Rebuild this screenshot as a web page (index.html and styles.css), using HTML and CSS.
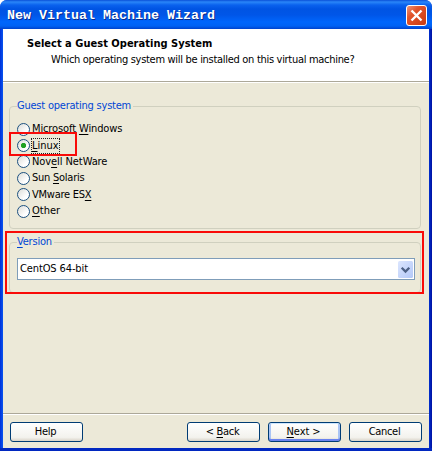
FILE: index.html
```html
<!DOCTYPE html>
<html lang="en">
<head>
<meta charset="utf-8">
<title>New Virtual Machine Wizard</title>
<link rel="stylesheet" href="styles.css">
</head>
<body>
<div class="window">
  <header class="titlebar">
    <span class="caption">New Virtual Machine Wizard</span>
    <svg class="close" width="21" height="21" viewBox="0 0 21 21">
      <defs><linearGradient id="red" x1="0" y1="0" x2="1" y2="1"><stop offset="0" stop-color="#ef9a7e"/><stop offset=".35" stop-color="#e2552c"/><stop offset="1" stop-color="#c83a10"/></linearGradient></defs>
      <rect x=".5" y=".5" width="20" height="20" rx="2.5" fill="url(#red)" stroke="#fff"/>
      <path d="M5.5 5.5l10 10M15.5 5.5l-10 10" stroke="#fff" stroke-width="2.4"/>
    </svg>
  </header>
  <section class="intro">
    <h1>Select a Guest Operating System</h1>
    <p>Which operating system will be installed on this virtual machine?</p>
  </section>
  <main>
    <fieldset class="group systems">
      <legend><span class="t-legend">Guest operating system</span></legend>
      <label><i class="radio"></i><span class="t-win">Microsoft <u>W</u>indows</span></label>
      <label><i class="radio on"></i><span class="t-linux focus"><u>L</u>inux</span></label>
      <label><i class="radio"></i><span class="t-novell">Nov<u>e</u>ll NetWare</span></label>
      <label><i class="radio"></i><span class="t-sun">Sun <u>S</u>olaris</span></label>
      <label><i class="radio"></i><span class="t-esx">VMware ES<u>X</u></span></label>
      <label><i class="radio"></i><span class="t-other"><u>O</u>ther</span></label>
      <div class="mark mark-linux"></div>
    </fieldset>
    <fieldset class="group version">
      <legend><span class="t-version"><u>V</u>ersion</span></legend>
      <div class="combo">
        <span class="t-centos">CentOS 64-bit</span>
        <svg width="15" height="17" viewBox="0 0 15 17">
          <defs><linearGradient id="blue" x1="0" y1="0" x2="1" y2="1"><stop offset="0" stop-color="#dce6fe"/><stop offset="1" stop-color="#b3c8f8"/></linearGradient></defs>
          <rect width="15" height="17" rx="1.5" fill="url(#blue)"/>
          <path d="M3.7 6.7l3.8 3.8 3.8-3.8" fill="none" stroke="#4d6185" stroke-width="2.3"/>
        </svg>
      </div>
      <div class="mark mark-version"></div>
    </fieldset>
  </main>
  <footer>
    <button class="help"><span class="t-help">Help</span></button>
    <button><span class="t-back">&lt; <u>B</u>ack</span></button>
    <button class="default"><span class="t-next"><u>N</u>ext &gt;</span></button>
    <button><span class="t-cancel">Cancel</span></button>
  </footer>
</div>
</body>
</html>
```
FILE: styles.css
```css
* { box-sizing: border-box; }
body { margin: 0; background: #fff; font: 11px/14px "DejaVu Sans Condensed", "DejaVu Sans", sans-serif; font-stretch: condensed; color: #000; }
.window {
  width: 432px; height: 451px; padding: 0 3px 3px;
  display: flex; flex-direction: column;
  background: linear-gradient(90deg, #0030d8 0, #0855f0 3px, #0648e4 428px, #0030d0 429px, #0010a0 432px);
  border-radius: 7px 7px 0 0; overflow: hidden;
  box-shadow: inset 0 -3px #0128c0;
}
.titlebar {
  height: 29px; flex: none; margin: 0 -3px; padding: 2px 5px 0 7px;
  display: flex; align-items: center; justify-content: space-between;
  background: linear-gradient(#0a50d8 0, #2a86f8 2px, #0a62ee 5px, #0054e3 9px, #0056e8 15px, #0066fc 22px, #0062f4 26px, #0042cc 29px);
}
.caption { padding-top: 1px; font: bold 13.33px/20px "Liberation Mono", monospace; color: #fff; text-shadow: 1px 1px #0b2a8a; white-space: pre; }
.close { display: block; }
.intro { height: 54px; flex: none; background: #fff; padding: 7px 0 0 24px; border-bottom: 1px solid #fff; box-shadow: inset 0 -1px #aca899; }
h1 { margin: 0; font: inherit; font-weight: bold; line-height: 15px; letter-spacing: .02px; white-space: nowrap; }
.intro p { margin: 1px 0 0 24px; line-height: 16px; letter-spacing: -.3px; white-space: nowrap; }
main { flex: 1; background: #ece9d8; padding: 16px 8px 0 6px; }
.group { position: relative; margin: 0; padding: 0 6px 0 7px; border: 1px solid #d0d0bf; border-radius: 4px; min-width: 0; }
legend { padding: 0 2px 0 0; height: 14px; color: #0046d5; white-space: nowrap; }
legend span { display: block; }
.t-legend { letter-spacing: -.22px; }
.t-version { letter-spacing: -.2px; }
.t-win { letter-spacing: -.12px; }
.t-novell { letter-spacing: -.08px; }
.t-sun { letter-spacing: -.25px; }
.t-esx { letter-spacing: -.25px; }
.t-centos { letter-spacing: -.12px; }
.t-help, .t-back, .t-cancel { position: relative; left: -1px; letter-spacing: -.3px; }
.t-next { position: relative; left: -1px; letter-spacing: -.1px; }
.systems { height: 130px; }
.systems legend + label { margin-top: 8px; }
label { display: flex; align-items: center; height: 16.4px; gap: 2px; white-space: nowrap; }
.radio { width: 13px; height: 13px; border: 1px solid #1c5180; border-radius: 50%; background: linear-gradient(135deg, #dcdcd7, #fff 70%); }
.radio.on { background: radial-gradient(circle, #21a121 0 2.2px, transparent 3px), linear-gradient(135deg, #dcdcd7, #fff 70%); }
.focus { outline: 1px dotted #222; }
u { text-decoration: underline; text-decoration-thickness: 1px; text-underline-offset: 2px; }
.mark { position: absolute; border: 2px solid #f90b08; pointer-events: none; }
.mark-linux { left: -1px; top: 19px; width: 68px; height: 24px; }
.version { margin-top: 6px; height: 58px; }
.mark-version { left: -5px; top: -18px; width: 419px; height: 63px; }
.combo { margin-top: 9px; height: 22px; width: 398px; padding: 0 1px 0 2px; display: flex; align-items: center; justify-content: space-between; background: #fff; border: 1px solid #7f9db9; white-space: nowrap; }
footer { height: 35px; flex: none; padding: 8px 7px 0 7px; display: flex; gap: 8px; background: #ece9d8; border-top: 1px solid #aca899; box-shadow: inset 0 1px #fff; }
button { width: 73px; height: 20px; padding: 0; font: inherit; line-height: 16px; color: #000; border: 1px solid #003c74; border-radius: 3px; background: linear-gradient(#fff, #f3f2ed 80%, #d9d3c8); white-space: nowrap; }
.help { margin-right: auto; }
.default { box-shadow: inset 0 1px #cee7ff, inset 0 -2px #6982ee, inset 2px 0 #a9c4f4, inset -2px 0 #a9c4f4; }
```
